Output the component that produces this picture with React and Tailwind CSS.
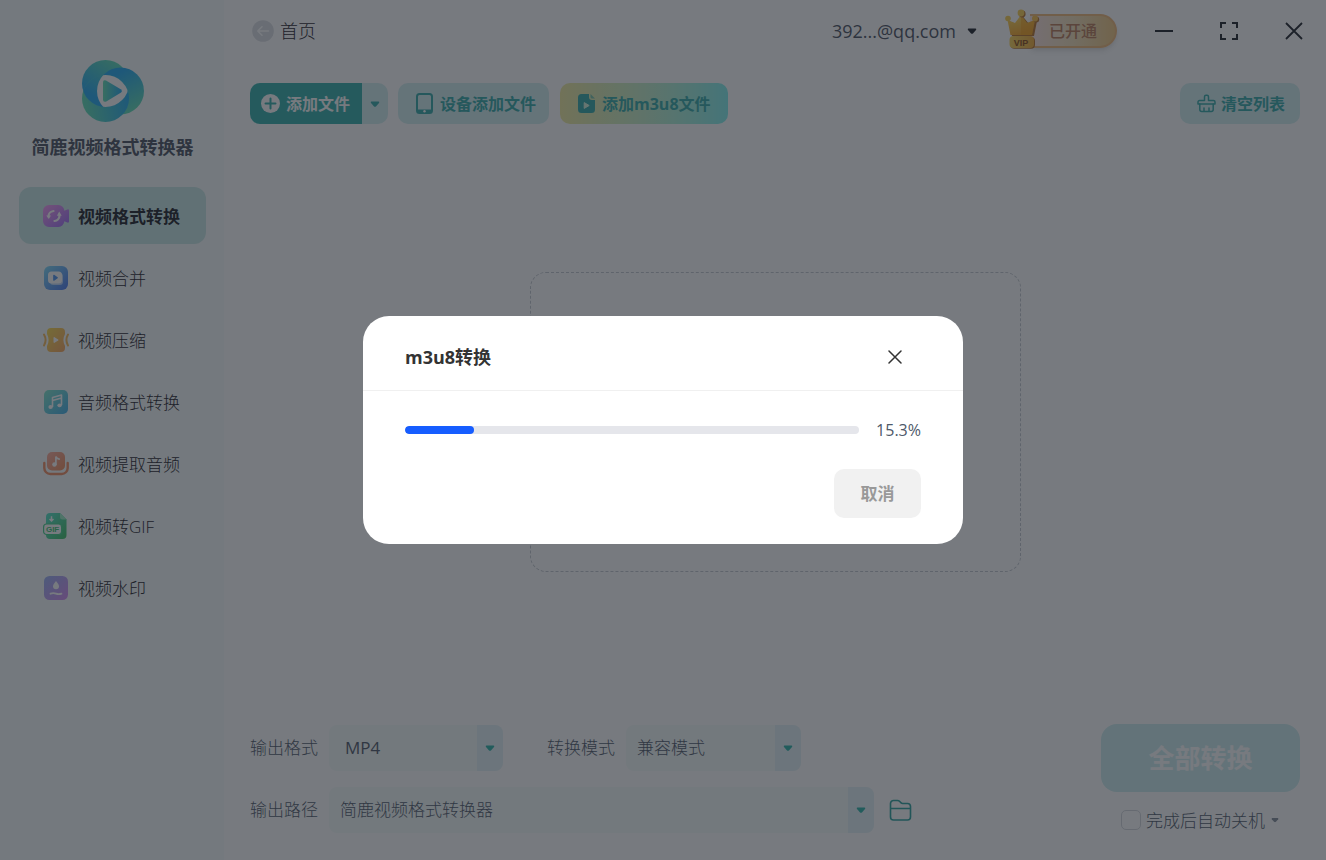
import { useState } from "react";

const NAV_ITEMS = [
  { id: "convert", label: "视频格式转换", icon: ConvertIcon },
  { id: "merge", label: "视频合并", icon: MergeIcon },
  { id: "compress", label: "视频压缩", icon: CompressIcon },
  { id: "audio", label: "音频格式转换", icon: AudioIcon },
  { id: "extract", label: "视频提取音频", icon: ExtractIcon },
  { id: "gif", label: "视频转GIF", icon: GifIcon },
  { id: "watermark", label: "视频水印", icon: WatermarkIcon },
];

function Gradient({ id, from, to, x1 = 0, y1 = 0, x2 = 1, y2 = 1 }) {
  return (
    <linearGradient id={id} x1={x1} y1={y1} x2={x2} y2={y2}>
      <stop offset="0" stopColor={from} />
      <stop offset="1" stopColor={to} />
    </linearGradient>
  );
}

// Three overlapping discs, each one lying over the next
function Logo() {
  return (
    <svg viewBox="0 0 62 62" className="size-[62px]" aria-hidden="true">
      <defs>
        <Gradient id="discA" from="#62e0b4" to="#22aaf0" x1={0.8} y1={0} x2={0.3} y2={0.8} />
        <Gradient id="discB" from="#22aaf0" to="#62e0b4" x1={0.3} y1={0.2} x2={0.7} y2={1} />
        <Gradient id="discC" from="#62e0b4" to="#22aaf0" x1={0} y1={0.6} x2={1} y2={0.4} />
        <Gradient id="play" from="#62e0b4" to="#22aaf0" x1={0} y1={0} x2={1} y2={0} />
        <clipPath id="clipA"><circle cx="23.5" cy="23.5" r="23.5" /></clipPath>
        <clipPath id="clipC"><circle cx="23.5" cy="38.5" r="23.5" /></clipPath>
      </defs>
      <circle cx="23.5" cy="23.5" r="23.5" fill="url(#discA)" />
      <circle cx="38.5" cy="31" r="23.5" fill="url(#discB)" />
      <circle cx="23.5" cy="38.5" r="23.5" fill="url(#discC)" />
      <g clipPath="url(#clipC)">
        <circle cx="23.5" cy="23.5" r="23.5" fill="url(#discA)" />
        <g clipPath="url(#clipA)">
          <circle cx="38.5" cy="31" r="23.5" fill="#fff" />
        </g>
      </g>
      <path d="M24 20.6 38.7 29.2Q41 31 38.7 32.8L24.3 41.4Q21 42.6 21 39.4V22.4Q21 19.4 24 20.6Z" fill="url(#play)" />
    </svg>
  );
}

function ConvertIcon() {
  return (
    <svg viewBox="0 0 26 26" className="size-[26px]" aria-hidden="true">
      <defs><Gradient id="gConvert" from="#f79bf2" to="#9a6cf5" /></defs>
      <path d="M6 2h9.500a6 6 0 0 1 5.800 5.700l3-1.300q1.700-.5 1.700 1v11.200q0 1.500-1.700 1l-3-1.300A6 6 0 0 1 15.500 24H6a6 6 0 0 1-6-6V8a6 6 0 0 1 6-6Z" fill="url(#gConvert)" />
      <path d="M5.500 13.500A5.500 5.500 0 0 1 10.500 8M16.500 12.500A5.500 5.500 0 0 1 11.500 18" fill="none" stroke="#fff" strokeWidth="2.200" strokeLinecap="round" />
      <path d="M3.200 12.500h4.800l-2.200 3.600ZM13.900 12.800h4.800l-2.500-4.300Z" fill="#fff" />
    </svg>
  );
}

function MergeIcon() {
  return (
    <svg viewBox="0 0 26 26" className="size-[26px]" aria-hidden="true">
      <defs><Gradient id="gMerge" from="#7fdcf8" to="#4a77f0" /></defs>
      <rect x="1" y="1" width="24" height="24" rx="6" fill="url(#gMerge)" />
      <rect x="7" y="8" width="13" height="12" rx="3.500" fill="#fff" opacity=".6" />
      <rect x="5" y="6.500" width="14" height="12" rx="3.500" fill="#fff" />
      <path d="M10.800 10.300 14.300 12.700 10.800 15.200Z" fill="#4c93ee" stroke="#4c93ee" strokeWidth="1.200" strokeLinejoin="round" />
    </svg>
  );
}

function CompressIcon() {
  return (
    <svg viewBox="0 0 26 26" className="size-[26px]" aria-hidden="true">
      <defs><Gradient id="gCompress" from="#fbdc4c" to="#f8a35c" /></defs>
      <path d="M8 1h10a4 4 0 0 1 4 4v2q-3.200 6 0 12v2a4 4 0 0 1-4 4H8a4 4 0 0 1-4-4v-2q3.200-6 0-12V5a4 4 0 0 1 4-4Z" fill="url(#gCompress)" />
      <path d="M1 7.500q3.200 5.500 0 11M25 7.500q-3.200 5.500 0 11" fill="none" stroke="#f8ba58" strokeWidth="2" strokeLinecap="round" />
      <path d="M11.200 10.800 14.800 13 11.200 15.200Z" fill="#fff" stroke="#fff" strokeWidth="1.400" strokeLinejoin="round" />
    </svg>
  );
}

function AudioIcon() {
  return (
    <svg viewBox="0 0 26 26" className="size-[26px]" aria-hidden="true">
      <defs><Gradient id="gAudio" from="#82e8cc" to="#42b0ea" /></defs>
      <rect x="1" y="1" width="24" height="24" rx="5" fill="url(#gAudio)" />
      <path d="M9.500 18V8.500L18.500 6V16M9.500 11.500 18.500 9" fill="none" stroke="#fff" strokeWidth="1.600" strokeLinejoin="round" />
      <ellipse cx="7.600" cy="18" rx="2.200" ry="1.900" fill="#fff" />
      <ellipse cx="16.600" cy="16.300" rx="2.200" ry="1.900" fill="#fff" />
    </svg>
  );
}

function ExtractIcon() {
  return (
    <svg viewBox="0 0 26 26" className="size-[26px]" aria-hidden="true">
      <defs><Gradient id="gExtract" from="#fbad9d" to="#f28e5a" /></defs>
      <rect x="4" y="1" width="18" height="18.500" rx="5" fill="url(#gExtract)" />
      <path d="M1.300 12v5a6 6 0 0 0 6 6h11.400a6 6 0 0 0 6-6v-5" fill="none" stroke="#f28e62" strokeWidth="2.400" strokeLinecap="round" />
      <path d="M12.900 13.500V5.500q.5 2 3.300 2.600" fill="none" stroke="#fff" strokeWidth="1.700" strokeLinecap="round" />
      <circle cx="11.400" cy="13.500" r="2.200" fill="#fff" />
    </svg>
  );
}

function GifIcon() {
  return (
    <svg viewBox="0 0 26 26" className="size-[26px]" aria-hidden="true">
      <defs><Gradient id="gGif" from="#55e6cc" to="#3fc063" /></defs>
      <path d="M7 0h10l6.500 6.500V22a4 4 0 0 1-4 4H7a4 4 0 0 1-4-4V4a4 4 0 0 1 4-4Z" fill="url(#gGif)" />
      <path d="M17 0v4a2.500 2.500 0 0 0 2.500 2.500h4Z" fill="#9cf0c6" />
      <path d="M8.500 3.300v4M6.500 6l2 2 2-2" fill="none" stroke="#fff" strokeWidth="1.500" />
      <rect x=".6" y="11" width="18" height="10.500" rx="3" fill="#fff" stroke="#46d08a" strokeWidth="1.200" />
      <text x="9.600" y="19.200" textAnchor="middle" fontSize="8" fontWeight="700" fontFamily="Liberation Sans, sans-serif" fill="#40c474">GIF</text>
    </svg>
  );
}

function WatermarkIcon() {
  return (
    <svg viewBox="0 0 26 26" className="size-[26px]" aria-hidden="true">
      <defs><Gradient id="gWatermark" from="#97b2f4" to="#d68af2" /></defs>
      <rect x="1" y="1" width="24" height="24" rx="5.500" fill="url(#gWatermark)" />
      <path d="M13 6q3 3.500 3 5.200a3 3 0 0 1-6 0Q10 9.500 13 6Z" fill="#fff" />
      <path d="M7.500 18.700q2.800-1 5.500 0t5.500 0" fill="none" stroke="#fff" strokeWidth="1.800" strokeLinecap="round" />
    </svg>
  );
}

function Caret({ className = "" }) {
  return (
    <svg viewBox="0 0 10 6" className={`w-2.5 h-1.5 ${className}`} aria-hidden="true">
      <path d="M1.500.5h7q1.200.3.500 1.500L6.200 5.200q-1.200 1-2.400 0L1 2Q.3.800 1.500.5Z" fill="currentColor" />
    </svg>
  );
}

function VipBadge() {
  return (
    <button className="relative h-[34px] w-[87px] ml-[53px] pl-[19px] rounded-r-full border-2 border-l-0 border-[#f0b878] bg-linear-to-r from-[#fbe3e0] via-[#f2dfb8] to-[#f0c67f] shadow-md text-base text-left font-medium text-[#b97a58] whitespace-nowrap">
      <svg viewBox="0 0 36 40" className="absolute -left-[26px] -top-[7px] w-9 h-10" aria-hidden="true">
        <defs>
          <Gradient id="gCrown" from="#ffdf5e" to="#f8a82a" x1={0} y1={0} x2={0.3} y2={1} />
          <Gradient id="gVip" from="#fbd458" to="#f2ac38" x1={0} y1={0} x2={1} y2={0} />
        </defs>
        <path d="M5 12 12 15 18.500 7 25 15 33 12 30 27H8Z" fill="#b8742c" />
        <path d="M3.500 11 11 14 17 6 23 14 31 11 28 26H6.500Z" fill="url(#gCrown)" />
        <path d="M17 6v20h11L31 11 23 14Z" fill="#f39c16" opacity=".5" />
        <circle cx="18.200" cy="5" r="3.400" fill="#b8742c" />
        <circle cx="32.200" cy="10.500" r="3" fill="#b8742c" />
        <circle cx="17" cy="4" r="3.400" fill="#fbcf50" />
        <circle cx="4" cy="9.500" r="2.800" fill="#fbcf50" />
        <circle cx="31" cy="9.500" r="3" fill="#fbc04a" />
        <rect x="6.500" y="28" width="24.500" height="11.800" rx="4" fill="#b8742c" />
        <rect x="5.500" y="27" width="24.500" height="12" rx="4" fill="url(#gVip)" />
        <text x="17" y="36.500" textAnchor="middle" fontSize="9" fontWeight="700" fontFamily="Liberation Sans, sans-serif" fill="#8a4c18">VIP</text>
      </svg>
      已开通
    </button>
  );
}

function Dropdown({ id, options, className, selectClass }) {
  return (
    <div className={`relative h-[46px] rounded-lg overflow-hidden bg-[#f6fcfa] ${className}`}>
      <select id={id} className={`appearance-none size-full pr-8 text-[17px] text-[#4e5969] bg-transparent ${selectClass}`}>
        {options.map(o => <option key={o}>{o}</option>)}
      </select>
      <span className="absolute inset-y-0 right-0 w-[26px] flex items-center justify-center bg-[#e4f3f7] text-[#2bb3a9] pointer-events-none">
        <Caret />
      </span>
    </div>
  );
}

function Sidebar({ active, onSelect }) {
  return (
    <aside className="w-56 shrink-0 bg-[#f8fdfc] pt-[60px] pl-[19px] pr-[18px]">
      <div className="flex flex-col items-center">
        <Logo />
        <h1 className="mt-3 text-lg leading-[26px] font-bold text-[#4a5060] whitespace-nowrap">简鹿视频格式转换器</h1>
      </div>
      <nav className="mt-[27px] flex flex-col gap-[5px]">
        {NAV_ITEMS.map(({ id, label, icon: Icon }) => (
          <button
            key={id}
            onClick={() => onSelect(id)}
            className={`h-[57px] pl-6 flex items-center gap-[9px] rounded-xl text-[17px] text-[#1d2129] ${
              id === active ? "bg-[#c9e8e6] font-bold" : "font-light"
            }`}
          >
            <Icon />
            <span className="pt-0.5">{label}</span>
          </button>
        ))}
      </nav>
    </aside>
  );
}

function TitleBar() {
  return (
    <header className="-mr-[3px] h-[62px] flex items-center">
      <button className="flex items-center gap-1.5 text-lg font-light text-[#1d2129]">
        <svg viewBox="0 0 22 22" className="w-[22px] h-[22px] ml-0.5" aria-hidden="true">
          <circle cx="11" cy="11" r="10.800" fill="#dcdfe3" />
          <path d="M16.500 11H6M10 6.800 5.800 11l4.200 4.200" fill="none" stroke="#fff" strokeWidth="1.600" strokeLinecap="round" strokeLinejoin="round" />
        </svg>
        首页
      </button>

      <button className="ml-auto flex items-center gap-[11px] text-lg text-[#4a5060]">
        392...@qq.com
        <Caret className="text-[#1d2129]" />
      </button>
      <VipBadge />

      <div className="ml-[38px] flex items-center gap-[47px] text-[#1d2129]">
        <button aria-label="最小化">
          <svg viewBox="0 0 18 18" className="size-[18px]"><path d="M0 9h18" stroke="currentColor" strokeWidth="2" /></svg>
        </button>
        <button aria-label="最大化">
          <svg viewBox="0 0 18 18" className="size-[18px]">
            <path d="M6 1H1v5M12 1h5v5M17 12v5h-5M6 17H1v-5" fill="none" stroke="currentColor" strokeWidth="2" />
          </svg>
        </button>
        <button aria-label="关闭">
          <svg viewBox="0 0 18 18" className="size-[18px]">
            <path d="m1 1 16 16M17 1 1 17" stroke="currentColor" strokeWidth="1.800" />
          </svg>
        </button>
      </div>
    </header>
  );
}

function Toolbar() {
  return (
    <div className="mt-[21px] h-[41px] flex items-stretch text-base font-bold text-[#34aaa8]">
      <div className="flex rounded-[10px] overflow-hidden">
        <button className="w-28 pl-[11px] flex items-center gap-1.5 bg-[#34b0ab] text-white">
          <svg viewBox="0 0 19 19" className="size-[19px]" aria-hidden="true">
            <circle cx="9.500" cy="9.500" r="9.500" fill="#fff" />
            <path d="M9.500 4.500v10M4.500 9.500h10" stroke="#34b0ab" strokeWidth="2" strokeLinecap="round" />
          </svg>
          添加文件
        </button>
        <button aria-label="更多" className="w-[26px] flex items-center justify-center bg-[#d3eff1]">
          <Caret />
        </button>
      </div>

      <button className="ml-2.5 w-[151px] pl-[18px] flex items-center gap-[7px] rounded-[10px] bg-[#d3eff1]">
        <svg viewBox="0 0 17 21" className="w-[17px] h-[21px]" aria-hidden="true">
          <rect x="1" y="1" width="15" height="19" rx="2.500" fill="none" stroke="currentColor" strokeWidth="2" />
          <path d="M2 16.500h13V20H2Z" fill="currentColor" />
          <circle cx="8.500" cy="18.200" r="1.200" fill="#fff" />
        </svg>
        设备添加文件
      </button>

      <button className="ml-[11px] w-[168px] pl-[18px] flex items-center gap-[7px] rounded-[10px] bg-linear-to-r from-[#f0ea9e] via-[#c3eec9] via-50% to-[#80f0ee]">
        <svg viewBox="0 0 17 19" className="w-[17px] h-[19px]" aria-hidden="true">
          <path d="M3.500 0H11v3a3 3 0 0 0 3 3h3v9.500a3.500 3.500 0 0 1-3.500 3.500h-10A3.500 3.500 0 0 1 0 15.500v-12A3.500 3.500 0 0 1 3.500 0Z" fill="currentColor" />
          <path d="M12.500 0 17 4.500h-3A1.500 1.500 0 0 1 12.500 3Z" fill="currentColor" opacity=".6" />
          <path d="m6.200 8.600 5 2.900-5 2.900Z" fill="#d8f5dc" stroke="#d8f5dc" strokeWidth="1" strokeLinejoin="round" />
        </svg>
        添加m3u8文件
      </button>

      <button className="ml-auto w-[120px] pl-[17px] flex items-center gap-[5px] rounded-[10px] bg-[#d3eff1]">
        <svg viewBox="0 0 19 19" className="size-[19px]" fill="none" stroke="currentColor" strokeWidth="1.500" strokeLinejoin="round" strokeLinecap="round" aria-hidden="true">
          <path d="M7.500 6.500V2.800A1.500 1.500 0 0 1 9 1.300h1a1.500 1.500 0 0 1 1.500 1.500v3.700h5a1.500 1.500 0 0 1 1.500 1.500v2H1V8a1.500 1.500 0 0 1 1.500-1.500Z" />
          <path d="M2.800 10v5.500a2 2 0 0 0 2 2h9.400a2 2 0 0 0 2-2V10M7 14v3.500M12 14v3.500" />
        </svg>
        清空列表
      </button>
    </div>
  );
}

function OutputSettings() {
  return (
    <div className="flex justify-between items-start pb-[27px] text-[17px] font-light text-[#4e5969]">
      <div className="flex flex-col gap-4 pt-px">
        <div className="flex items-center">
          <label htmlFor="format">输出格式</label>
          <Dropdown id="format" options={["MP4", "MKV", "MOV"]} className="ml-[11px] w-[174px]" selectClass="pl-4 font-normal" />
          <label htmlFor="mode" className="ml-11">转换模式</label>
          <Dropdown id="mode" options={["兼容模式", "快速模式"]} className="ml-[11px] w-[175px]" selectClass="pl-[11px]" />
        </div>
        <div className="flex items-center">
          <label htmlFor="path">输出路径</label>
          <Dropdown id="path" options={["简鹿视频格式转换器"]} className="ml-[11px] w-[545px]" selectClass="pl-[11px]" />
          <button aria-label="打开文件夹" className="ml-[15px] text-[#2ba39f]">
            <svg viewBox="0 0 23 22" className="w-[23px] h-[22px]" fill="none" stroke="currentColor" strokeWidth="1.600" strokeLinejoin="round">
              <path d="M1.500 4.500a3 3 0 0 1 3-3h4q1.200 0 2 .8l1.600 1.600q.6.600 1.500.6h4.900a3 3 0 0 1 3 3v10.500a3 3 0 0 1-3 3h-14a3 3 0 0 1-3-3ZM1.500 9.500h20" />
            </svg>
          </button>
        </div>
      </div>

      <div className="w-[199px] flex flex-col items-center">
        <button className="w-full h-[68px] pt-0.5 rounded-2xl bg-[#cdeef0] text-[26px] font-bold text-white">全部转换</button>
        <div className="mt-4 flex items-center">
          <label className="flex items-center gap-[5px]">
            <input type="checkbox" className="appearance-none size-5 rounded-[5px] border border-[#d5d8dd]" />
            完成后自动关机
          </label>
          <button aria-label="选项" className="ml-[5px] text-[#86909c]"><Caret className="scale-80" /></button>
        </div>
      </div>
    </div>
  );
}

function ProgressDialog({ percent, onClose }) {
  return (
    <div className="fixed inset-0 flex items-center justify-center bg-[#1d2129]/60">
      <div role="dialog" aria-labelledby="dialog-title" className="w-[600px] rounded-[26px] bg-white pb-[26px]">
        <div className="h-[75px] pt-2 pl-[42px] pr-[61px] flex items-center justify-between border-b border-[#f0f0f0]">
          <h2 id="dialog-title" className="text-lg font-bold text-[#333]">m3u8转换</h2>
          <button onClick={onClose} aria-label="关闭">
            <svg viewBox="0 0 14 14" className="size-3.5">
              <path d="m1 1 12 12M13 1 1 13" stroke="#333" strokeWidth="1.500" strokeLinecap="round" />
            </svg>
          </button>
        </div>
        <div className="px-[42px] pt-[27px] flex items-center gap-[17px]">
          <div role="progressbar" aria-label="m3u8转换" aria-valuenow={percent} className="flex-1 h-2 rounded-full bg-[#e5e6eb] overflow-hidden">
            <div className="h-full rounded-full bg-[#165dff]" style={{ width: `${percent}%` }} />
          </div>
          <span className="text-base text-[#4e5969]">{percent}%</span>
        </div>
        <div className="px-[42px] mt-[27px] flex justify-end">
          <button onClick={onClose} className="w-[87px] h-[49px] rounded-[10px] bg-[#f1f1f1] text-[17px] font-bold text-[#999]">
            取消
          </button>
        </div>
      </div>
    </div>
  );
}

function App() {
  const [active, setActive] = useState("convert");
  const [converting, setConverting] = useState(true);

  return (
    <div className="flex min-h-screen bg-white font-['Open_Sans','Noto_Sans_CJK_SC',sans-serif]">
      <Sidebar active={active} onSelect={setActive} />
      <main className="flex-1 min-w-0 px-[26px] flex flex-col">
        <TitleBar />
        <Toolbar />
        <div className="flex-1 flex items-center justify-center pb-1">
          <div className="w-[491px] h-[300px] rounded-2xl border border-dashed border-[#c4c9cf]" />
        </div>
        <OutputSettings />
      </main>
      {converting && <ProgressDialog percent={15.3} onClose={() => setConverting(false)} />}
    </div>
  );
}

export default App;
